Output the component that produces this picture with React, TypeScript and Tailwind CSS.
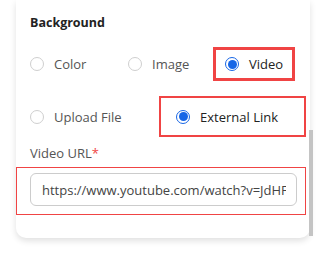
import React from 'react';

function Radio({ checked }: { checked?: boolean }) {
    return checked ? (
        <span className="flex h-[14px] w-[14px] shrink-0 items-center justify-center rounded-full border border-[#1766e6]">
            <span className="h-[9px] w-[9px] rounded-full bg-[#1766e6]" />
        </span>
    ) : (
        <span className="h-[14px] w-[14px] shrink-0 rounded-full border border-[#cfcfcf] bg-white" />
    );
}

function Option({ label, checked, className = '' }: { label: string; checked?: boolean; className?: string }) {
    return (
        <div className={`flex items-center gap-[10px] ${className}`}>
            <Radio checked={checked} />
            <span className={checked ? 'text-[#222]' : 'text-[#555]'}>{label}</span>
        </div>
    );
}

export default function App() {
    return (
        <div
            className="relative h-[257px] w-[326px] overflow-hidden bg-white text-[13px] leading-[18px]"
            style={{ fontFamily: '"Open Sans", "Liberation Sans", sans-serif' }}
        >
            <div className="ml-[16px] w-[294px] rounded-b-[10px] bg-white pb-[23px] pt-[14px] shadow-[0_3px_6px_rgba(0,0,0,0.12)]">
                <div className="pl-[14px] text-[12.5px] font-bold text-[#222]">Background</div>

                {/* Background type */}
                <div className="mt-[15px] flex items-center">
                    <Option label="Color" className="w-[112px] pl-[14px]" />
                    <Option label="Image" className="w-[85px]" />
                    <div className="flex h-[34px] w-[82px] items-center border-[3px] border-[#f04444] pl-[9px]">
                        <Option label="Video" checked />
                    </div>
                </div>

                {/* Video source */}
                <div className="mt-[15px] flex items-center">
                    <Option label="Upload File" className="w-[143px] pl-[14px]" />
                    <div className="flex h-[41px] w-[147px] items-center border-2 border-[#f04444] pl-[15px]">
                        <Option label="External Link" checked />
                    </div>
                </div>

                <div className="mt-[7px] pl-[14px] text-[#555]">
                    Video URL<span className="text-[#f04444]">*</span>
                </div>

                <div className="mt-[5px] w-[290px] border border-[#f04444] pb-[8px] pl-[13px] pr-[8px] pt-[5px]">
                    <div className="flex h-[33px] items-center rounded-[6px] border border-[#cccccc] pl-[11px] pr-[10px] text-[#444]">
                        <span className="overflow-hidden whitespace-nowrap">https://www.youtube.com/watch?v=JdHFK</span>
                    </div>
                </div>
            </div>

            {/* scrollbar thumb */}
            <div className="absolute left-[309px] top-[130px] h-[106px] w-[4px] bg-[#c4c4c4]" />
        </div>
    );
}
